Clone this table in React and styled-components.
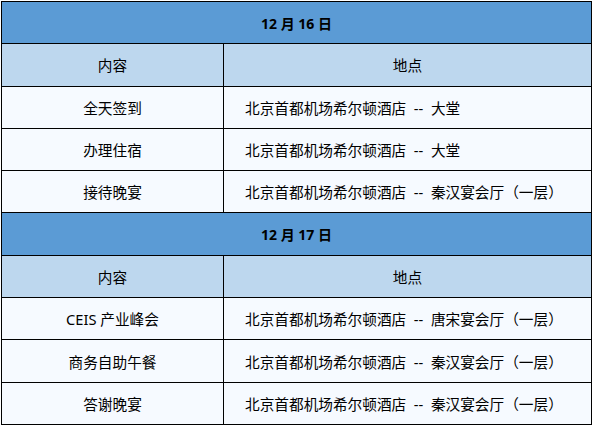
import styled, {createGlobalStyle} from "styled-components";

const GlobalStyle = createGlobalStyle`
  html, body {
    margin: 0;
    padding: 0;
    background: #fff;
  }
  body {
    font-family: "Noto Sans", "Noto Sans CJK SC", sans-serif;
    color: #000;
  }
`;

const Wrap = styled.div`
  padding: 1px 0 0 1px;
`;

const Table = styled.table`
  border-collapse: collapse;
  width: 591px;
  table-layout: fixed;
  font-size: 14.67px;
`;

const Row = styled.tr`
  height: 42.3px;
`;

const DateCell = styled.td`
  background: #5b9bd5;
  border: 1px solid #000;
  text-align: center;
  font-weight: 700;
  font-size: 14px;
  padding: 0;
`;

const HeadCell = styled.td`
  background: #bdd7ee;
  border: 1px solid #000;
  text-align: center;
  padding: 0;
`;

const Cell = styled.td`
  background: #f6faff;
  border: 1px solid #000;
  padding: 0 0 0 ${p => p.$left ? "21px" : "0"};
  text-align: ${p => p.$left ? "left" : "center"};
  white-space: pre;
`;

const HOTEL = "北京首都机场希尔顿酒店  --  ";

const days = [
  {
    date: "12 月 16 日",
    rows: [
      ["全天签到", HOTEL + "大堂"],
      ["办理住宿", HOTEL + "大堂"],
      ["接待晚宴", HOTEL + "秦汉宴会厅（一层）"],
    ],
  },
  {
    date: "12 月 17 日",
    rows: [
      ["CEIS 产业峰会", HOTEL + "唐宋宴会厅（一层）"],
      ["商务自助午餐", HOTEL + "秦汉宴会厅（一层）"],
      ["答谢晚宴", HOTEL + "秦汉宴会厅（一层）"],
    ],
  },
];

export default function App() {
  return (
    <>
      <GlobalStyle />
      <Wrap>
        <Table>
          <colgroup>
            <col style={{width: 222}} />
            <col />
          </colgroup>
          <tbody>
            {days.map(day => [
              <Row key={day.date}>
                <DateCell colSpan={2}>{day.date}</DateCell>
              </Row>,
              <Row key={day.date + "h"}>
                <HeadCell>内容</HeadCell>
                <HeadCell>地点</HeadCell>
              </Row>,
              ...day.rows.map(([what, where], i) => (
                <Row key={day.date + i}>
                  <Cell>{what}</Cell>
                  <Cell $left>{where}</Cell>
                </Row>
              )),
            ])}
          </tbody>
        </Table>
      </Wrap>
    </>
  );
}
